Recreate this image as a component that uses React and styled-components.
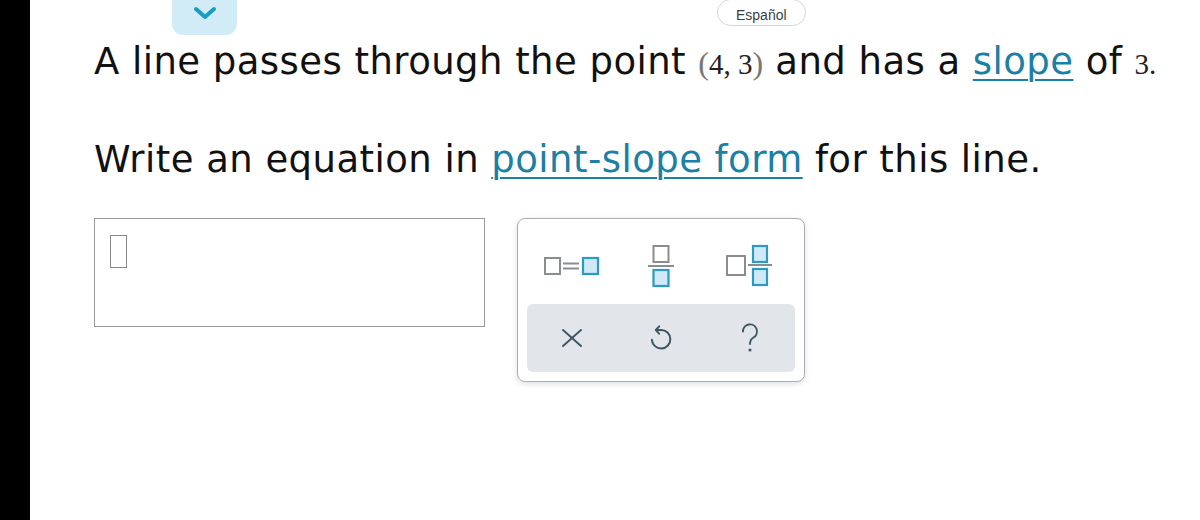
import React from "react";
import styled, { createGlobalStyle } from "styled-components";

const Global = createGlobalStyle`
  html, body { margin: 0; padding: 0; background: #fff; }
  body { font-family: "DejaVu Sans", Verdana, sans-serif; }
`;

const Page = styled.div`
  display: flex;
  width: 1200px;
  height: 520px;
  overflow: hidden;
`;

const SideBar = styled.div`
  width: 30px;
  flex: none;
  background: #000;
`;

const Main = styled.div`
  flex: 1;
  display: flex;
  flex-direction: column;
`;

const TopBar = styled.div`
  display: flex;
  align-items: flex-start;
  height: 36px;
`;

const Tab = styled.button`
  margin-left: 142px;
  width: 65px;
  height: 35px;
  border: none;
  padding: 0;
  background: #d1ecf6;
  border-radius: 0 0 11px 11px;
  display: flex;
  align-items: flex-start;
  justify-content: center;
  padding-top: 5px;
  box-sizing: border-box;
`;

const Pill = styled.button`
  margin-left: 480px;
  margin-top: -1px;
  height: 27px;
  padding: 4px 18px 0;
  border: 1px solid #d3d6d9;
  border-radius: 14px;
  background: #fff;
  font-family: "Liberation Sans", Arial, sans-serif;
  font-size: 14px;
  color: #3a3f44;
`;

const Content = styled.div`
  padding-left: 64px;
  display: flex;
  flex-direction: column;
`;

const Para = styled.p`
  margin: ${(p) => p.$mt}px 0 0;
  font-size: 37px;
  letter-spacing: 0.45px;
  line-height: 48px;
  color: #111;
  white-space: nowrap;
`;

const Link = styled.a`
  color: #1b7fa6;
  text-decoration: underline;
  text-decoration-thickness: 2px;
  text-underline-offset: 5px;
`;

const MathText = styled.span`
  font-family: "Liberation Serif", "Times New Roman", serif;
  font-size: 29px;
  letter-spacing: 0;
  color: #222;
`;

const Paren = styled.span`
  color: #777;
  font-size: 32px;
`;

const AnswerRow = styled.div`
  display: flex;
  align-items: flex-start;
  gap: 32px;
  margin-top: 34px;
`;

const InputBox = styled.div`
  width: 391px;
  height: 109px;
  box-sizing: border-box;
  border: 1.5px solid #9a9a9a;
  padding: 16px 0 0 15px;
`;

const Caret = styled.div`
  width: 17px;
  height: 33px;
  box-sizing: border-box;
  border: 1.5px solid #8a8a8a;
`;

const Keypad = styled.div`
  width: 288px;
  height: 164px;
  box-sizing: border-box;
  border: 1.5px solid #a9adb1;
  border-radius: 8px;
  box-shadow: 0 2px 6px rgba(0, 0, 0, 0.12);
  padding: 9px;
  display: flex;
  flex-direction: column;
  background: #fff;
`;

const KeyRow = styled.div`
  display: grid;
  grid-template-columns: repeat(3, 1fr);
  height: ${(p) => p.$h}px;
  border-radius: 6px;
  background: ${(p) => (p.$tools ? "#e2e6ea" : "transparent")};
  margin-top: ${(p) => (p.$tools ? "1px" : "0")};
`;

const Key = styled.button`
  border: none;
  background: transparent;
  padding: 0;
  display: flex;
  align-items: center;
  justify-content: center;
`;

const G = "#8a8d8f";
const B = "#2b9cbf";
const BF = "#cfeaf6";

const EqIcon = () => (
  <svg width="56" height="24" viewBox="0 0 56 24">
    <rect x="1" y="4" width="15" height="16" fill="none" stroke={G} strokeWidth="2" />
    <line x1="19" y1="9.5" x2="35" y2="9.5" stroke={G} strokeWidth="2" />
    <line x1="19" y1="14.5" x2="35" y2="14.5" stroke={G} strokeWidth="2" />
    <rect x="39" y="4" width="15" height="16" fill={BF} stroke={B} strokeWidth="2.2" />
  </svg>
);

const FracIcon = () => (
  <svg width="28" height="44" viewBox="0 0 28 44">
    <rect x="6.5" y="2" width="15" height="16" fill="none" stroke={G} strokeWidth="2" />
    <line x1="1" y1="22" x2="27" y2="22" stroke={G} strokeWidth="2" />
    <rect x="6.5" y="26" width="15" height="16" fill={BF} stroke={B} strokeWidth="2.2" />
  </svg>
);

const MixedIcon = () => (
  <svg width="50" height="44" viewBox="0 0 50 44">
    <rect x="2" y="12" width="18" height="19" fill="none" stroke={G} strokeWidth="2" />
    <rect x="28" y="2" width="14" height="16" fill={BF} stroke={B} strokeWidth="2.2" />
    <line x1="23" y1="21" x2="47" y2="21" stroke={G} strokeWidth="2" />
    <rect x="28" y="25" width="14" height="16" fill={BF} stroke={B} strokeWidth="2.2" />
  </svg>
);

const S = "#3f5661";

const ClearIcon = () => (
  <svg width="24" height="24" viewBox="0 0 24 24" fill="none" stroke={S} strokeWidth="1.9" strokeLinecap="round">
    <line x1="3" y1="4" x2="21" y2="20" />
    <line x1="21" y1="4" x2="3" y2="20" />
  </svg>
);

const UndoIcon = () => (
  <svg width="30" height="32" viewBox="0 0 24 26" fill="none" stroke={S} strokeWidth="1.6" strokeLinecap="round" strokeLinejoin="round">
    <path d="M8 6.5 H12 A7.5 7.5 0 1 1 4.6 14.5" />
    <path d="M10.5 3.5 L7.8 6.5 L10.5 9.5" />
  </svg>
);

const HelpIcon = () => (
  <svg width="24" height="30" viewBox="0 0 24 30" fill="none" stroke={S} strokeWidth="1.9" strokeLinecap="round">
    <path d="M5 8.5 A7 7 0 1 1 15.5 14.5 C13 16 12 17.5 12 21" />
    <circle cx="12" cy="27" r="0.6" fill={S} />
  </svg>
);

const Chevron = () => (
  <svg width="24" height="16" viewBox="0 0 24 16" fill="none" stroke="#1a9bc6" strokeWidth="4" strokeLinecap="round" strokeLinejoin="round">
    <path d="M3 4 L12 12 L21 4" />
  </svg>
);

export default function App() {
  return (
    <>
      <Global />
      <Page>
        <SideBar />
        <Main>
          <TopBar>
            <Tab aria-label="collapse">
              <Chevron />
            </Tab>
            <Pill>Español</Pill>
          </TopBar>
          <Content>
            <Para $mt={2}>
              A line passes through the point{" "}
              <MathText>
                <Paren>(</Paren>4, 3<Paren>)</Paren>
              </MathText>{" "}
              and has a <Link>slope</Link> of <MathText>3.</MathText>
            </Para>
            <Para $mt={48}>
              Write an equation in <Link>point-slope form</Link> for this line.
            </Para>
            <AnswerRow>
              <InputBox>
                <Caret />
              </InputBox>
              <Keypad>
                <KeyRow $h={76}>
                  <Key><EqIcon /></Key>
                  <Key><FracIcon /></Key>
                  <Key><MixedIcon /></Key>
                </KeyRow>
                <KeyRow $tools $h={68}>
                  <Key><ClearIcon /></Key>
                  <Key><UndoIcon /></Key>
                  <Key><HelpIcon /></Key>
                </KeyRow>
              </Keypad>
            </AnswerRow>
          </Content>
        </Main>
      </Page>
    </>
  );
}
